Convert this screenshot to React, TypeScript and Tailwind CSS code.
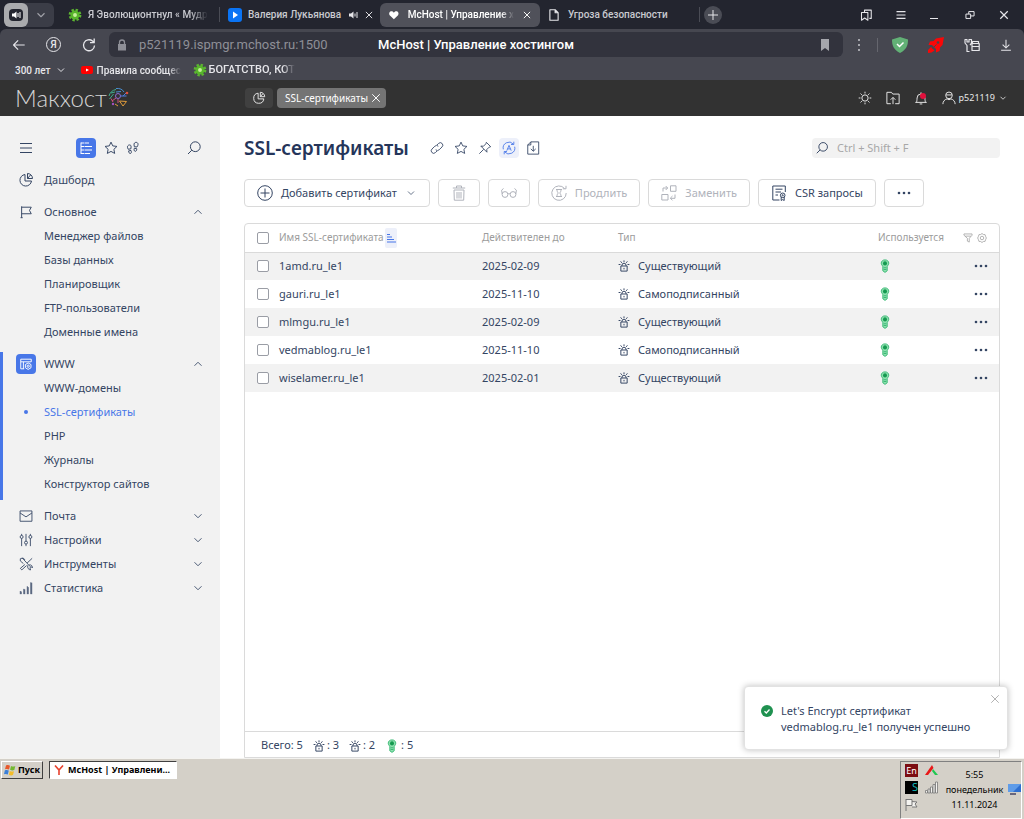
import { useState, type ReactNode } from "react";

const menu = [
  {
    title: "Основное",
    icon: "flag",
    items: ["Менеджер файлов", "Базы данных", "Планировщик", "FTP-пользователи", "Доменные имена"],
  },
  {
    title: "WWW",
    icon: "www",
    items: ["WWW-домены", "SSL-сертификаты", "PHP", "Журналы", "Конструктор сайтов"],
  },
];

const closedMenu = [
  { title: "Почта", icon: "mail" },
  { title: "Настройки", icon: "sliders" },
  { title: "Инструменты", icon: "tools" },
  { title: "Статистика", icon: "stats" },
];

const certificates = [
  { name: "1amd.ru_le1", date: "2025-02-09", type: "Существующий" },
  { name: "gauri.ru_le1", date: "2025-11-10", type: "Самоподписанный" },
  { name: "mlmgu.ru_le1", date: "2025-02-09", type: "Существующий" },
  { name: "vedmablog.ru_le1", date: "2025-11-10", type: "Самоподписанный" },
  { name: "wiselamer.ru_le1", date: "2025-02-01", type: "Существующий" },
];

// all icons are drawn on a 16x16 grid
const icons: Record<string, ReactNode> = {
  menu: <path d="M2 3.5h12M2 8h12M2 12.5h12" />,
  tree: <path d="M3 2.5v11.5M3 3h3M3 6.5h3M3 10h3M3 13.5h3M6.5 3H11M6.5 6.5H14M6.5 10H14M6.5 13.5H12" />,
  star: <path d="M8 1.300l2 4.300 4.800.6-3.500 3.300.9 4.700L8 11.900l-4.200 2.300.9-4.700L1.200 6.200 6 5.600z" />,
  steps: (
    <>
      <path d="M4 4.500c-1.900.2-2.700 1.700-2.200 3.200l.8 1.800 3-.6.2-2.200c.1-1.400-.6-2.300-1.800-2.200zM3 11.300l2.700-.5c.8 1.600.5 3.200-.6 3.500-1.200.2-2.100-1.200-2.100-3zM11.700 1.500c-1.700-.1-2.700 1.300-2.500 2.900l.3 2.100 3 .4 1-1.900c.7-1.600 0-3.300-1.800-3.500zM9.500 8.300l2.800.5c.1 1.800-.7 3.100-1.800 3-1.200-.2-1.600-1.900-1-3.500z" />
    </>
  ),
  search: (
    <>
      <circle cx="9.300" cy="6.700" r="4.900" />
      <path d="M5.800 10.200L2 14" />
    </>
  ),
  pie: (
    <>
      <path d="M7 2.500a5.800 5.800 0 1 0 6.500 6.500H7z" />
      <path d="M9.500 1.500v5h5a5 5 0 0 0-5-5zM9.500 6.500l3-3.500" />
    </>
  ),
  flag: <path d="M3 1.500v13M1.800 14.500h2.400M3 2.500h11l-2 3.700 2 3.800H3" />,
  www: (
    <>
      <path d="M6 13.500H2v-11h12v3M2 5.500h12M5 5.500v8" />
      <circle cx="10.500" cy="10.500" r="1.300" />
      <path d="M10.500 6.800l3.200 1.800v3.700l-3.200 1.900-3.200-1.900V8.600z" />
    </>
  ),
  mail: <path d="M1.200 2.200h13.600v11.800H1.200zM1.200 4.500L8 9l6.800-4.500" />,
  sliders: (
    <>
      <circle cx="3" cy="4.500" r="1.700" />
      <circle cx="8" cy="11" r="1.700" />
      <circle cx="13" cy="4.500" r="1.700" />
      <path d="M3 1v1.800M3 6.200V15M8 1v8.300M8 12.700V15M13 1v1.800M13 6.200V15" />
    </>
  ),
  tools: (
    <>
      <path d="M1.500 2l2.300-.8 9 9.800M1.500 2v2.500L5 7.500M6.500 3.500c0-1.500-1.500-2.500-3-2M15 1.500L9.200 7M6.700 8.600L1.500 13l1.700 1.700 5.500-5" />
      <path d="M10 9.500c-.6 3 .8 5.200 3.300 5.200l-.9-2.400 1.600-1.300 1.200 1.500c.4-2.200-1.200-3.900-3.600-3.500" />
    </>
  ),
  stats: <path d="M1.500 15v-3.500M5.500 15V9M9.500 15V6M13.500 15V1.500M2.500 15v-3M6.500 15V9.500M10.500 15V7M14.500 15V2" />,
  up: <path d="M4 10l4-4 4 4" />,
  down: <path d="M4 6l4 4 4-4" />,
  close: <path d="M3 3l10 10M13 3L3 13" />,
  link: (
    <>
      <path d="M6.500 10a2.800 2.800 0 0 0 4 0l3.300-3.200a2.800 2.800 0 0 0-4-4L8 4.500" />
      <path d="M9.500 6a2.800 2.800 0 0 0-4 0L2.200 9.200a2.800 2.800 0 0 0 4 4L8 11.500" />
    </>
  ),
  pin: <path d="M9.500 1.500l5 5-1.700.5-2.800 2.800.2 3L3.200 5.800l3 .2L9 3.200zM6.500 9.500L1.500 14.500" />,
  refresh: (
    <>
      <path d="M1.500 9.500A6.700 6.700 0 0 1 13 3.500M14.500 6.500A6.700 6.700 0 0 1 3 12.500M13.500 .8V4h-3.200M2.500 15.200V12h3.200" />
      <path d="M5.500 11l2.500-6 2.500 6M6.500 9h3" />
    </>
  ),
  exportFile: <path d="M5.500 1h9v14H2V4.500zM5.500 1v3.500H2M8.300 5.500v6M5.500 9l2.800 2.700L11.100 9" />,
  plus: (
    <>
      <circle cx="8" cy="8" r="7.300" />
      <path d="M8 3.500v9M3.500 8h9" />
    </>
  ),
  trash: <path d="M1.800 3h12.400M5.500 3V1h5v2M3 5l.3 10.200h9.400L13 5zM6 7v6.500M8 7v6.500M10 7v6.500" />,
  glasses: (
    <>
      <circle cx="4" cy="9.500" r="2.900" />
      <circle cx="12" cy="9.500" r="2.900" />
      <path d="M6.900 9c.7-.6 1.500-.6 2.200 0M1.200 9L.6 5.200 2.500 3.500M14.800 9l.6-3.800-1.900-1.700" />
    </>
  ),
  prolong: (
    <>
      <path d="M13.500 3.500A7.200 7.200 0 1 0 15.200 8M15 .8v3h-3.200" />
      <path d="M5 4.500h6M5 11.500h6M6 4.500c0 2 .5 2.500 1.300 3.500C6.500 9 6 9.500 6 11.500M10 4.500c0 2-.5 2.500-1.300 3.500.8 1 1.300 1.500 1.300 3.500" />
    </>
  ),
  replace: <path d="M9.500.8H15v5.500H9.500zM.8 9.500H7V15H.8zM2 6.500V3h4.500M4.700 1l2 2-2 2M14 9.500v3.800H9.500M11.500 11l-2.200 2.200 2.200 2.200" />,
  csr: (
    <>
      <path d="M8.500 15H1.800V1h12.500v6M4.500 4.200h7M4.500 7h5.500M4.500 10H7" />
      <circle cx="11.700" cy="10.300" r="2.300" />
      <circle cx="11.700" cy="10.300" r=".6" />
      <path d="M10.200 12v3.500l1.500-.9 1.500.9V12" />
    </>
  ),
  lock: (
    <>
      <path d="M3.800 8h8.400v6.800H3.800zM5.300 8V7a2.700 2.700 0 0 1 5.400 0v1M8 10.500v2" />
      <path d="M8 .5v2.300M3.500 1.800l1.500 2M12.500 1.800l-1.500 2M.8 6h2.500M15.200 6h-2.500" />
    </>
  ),
  filter: <path d="M1.500 1.500h13v2L10 8.500v6L7 13V8.500l-5.500-5zM3.500 5h9" />,
  gear: (
    <>
      <path d="M8 .8l2.200 1.600 2.700.2.800 2.700L15 8l-1.300 2.700-.8 2.700-2.700.2L8 15.200l-2.200-1.600-2.700-.2-.8-2.700L1 8l1.300-2.700.8-2.700 2.700-.2z" />
      <circle cx="8" cy="8" r="2.800" />
    </>
  ),
  sun: (
    <>
      <circle cx="8" cy="8" r="3.600" />
      <path d="M8 .8v2M8 13.200v2M.8 8h2M13.200 8h2M2.900 2.900l1.500 1.500M11.600 11.600l1.500 1.500M13.100 2.900l-1.500 1.500M4.400 11.600l-1.500 1.500" />
    </>
  ),
  upload: <path d="M5.500 14.500H1V1.500h5.200l1.500 2H15v11h-4.500M8 15V7.500M5.300 10L8 7.300l2.700 2.700" />,
  bell: <path d="M1.500 13h13M3 13c0-1.500.5-2 .5-5a4.500 4.500 0 0 1 9 0c0 3 .5 3.500.5 5M8 1.500v2M6.500 14.800h3" />,
  user: (
    <>
      <circle cx="8" cy="5" r="3.800" />
      <path d="M4.500 4.500h7M1 15c0-3 2-5.300 4.800-6L8 10l2.200-1c2.800.7 4.800 3 4.800 6" />
    </>
  ),
  back: <path d="M14.500 8H2M7 2.700L1.800 8 7 13.300" />,
  reload: <path d="M13.500 8.500A5.500 5.500 0 1 1 11.500 4l1.700 1.500M13.200 1.500v4.200H9" />,
  download: <path d="M8 1v10.500M3.500 7.500L8 12l4.500-4.500M1.500 15h13" />,
  passwords: <path d="M5.500 14.500H3V8.500L1 6V2.500h2V5h2V2.500h2.500V6L6 8.200M8 6.500h7.200v7H8zM8.500 6.500v-2h6v2M8 9.500h7" />,
  tabs: <path d="M6 4.500v-3h9v11h-2.500M2 4.700h8.500V15L6.200 12 2 15z" />,
  restore: <path d="M1.500 6.500h7.500v7H1.500zM6 6.500v-4h8.500v7H9" />,
  page: <path d="M2.500 1h7l4 4v10h-11zM9.500 1v4h4" />,
};

function Icon({ name, size = "size-4", width = 1 }: { name: string; size?: string; width?: number }) {
  return (
    <svg
      viewBox="0 0 16 16"
      className={`${size} shrink-0`}
      fill="none"
      stroke="currentColor"
      strokeWidth={width}
      strokeLinejoin="round"
      aria-hidden="true"
    >
      {icons[name]}
    </svg>
  );
}

function Bulb() {
  return (
    <svg viewBox="0 0 16 16" className="size-3.5 shrink-0" aria-label="Используется">
      <path d="M8 1c2.600 0 4.300 1.600 4.300 3.800 0 1.700-1.400 2.700-1.800 3.900v4.800L8 15.300l-2.500-1.800V8.700C5.100 7.500 3.700 6.500 3.700 4.800 3.700 2.600 5.400 1 8 1z" fill="#8fe0b0" stroke="#2fb56d" />
      <circle cx="8" cy="5" r="2.300" fill="#159a50" />
      <path d="M6.500 10h3M6.500 12h3" stroke="#2fb56d" />
    </svg>
  );
}

function Dots() {
  return (
    <svg viewBox="0 0 14 4" className="h-1 w-3.5" fill="currentColor" aria-hidden="true">
      <circle cx="2" cy="2" r="1.300" />
      <circle cx="7" cy="2" r="1.300" />
      <circle cx="12" cy="2" r="1.300" />
    </svg>
  );
}

function Gearwheel() {
  return (
    <svg viewBox="0 0 16 16" className="size-3.5 shrink-0" aria-hidden="true">
      <circle cx="8" cy="8" r="5.800" fill="none" stroke="#5cb531" strokeWidth="3" strokeDasharray="2.600 1.950" />
      <circle cx="8" cy="8" r="5.200" fill="#57b52b" />
      <circle cx="8" cy="8" r="2.200" fill="#c5ee9b" />
    </svg>
  );
}

function BrowserBar() {
  return (
    <header className="bg-[#23252f] font-[Roboto,sans-serif] text-[#e6e6ea]">
      <div className="flex h-[29px] items-center text-[10px] font-medium">
        <div className="ml-1 flex h-6 w-[50px] shrink-0 items-center rounded-md bg-[#3b3d47]">
          <button aria-label="Звук" className="flex size-6 items-center justify-center rounded-md bg-[#aaabae]">
            <svg viewBox="0 0 16 16" className="size-4" aria-hidden="true">
              <rect x="1" y="2" width="14" height="12" rx="4" fill="#23252f" />
              <path d="M4 6.500h2L8.500 4.500v7L6 9.500H4z" fill="#fff" />
              <path d="M10 6v4M12 5v6" stroke="#fff" />
            </svg>
          </button>
          <button aria-label="Список вкладок" className="flex flex-1 justify-center text-[#a0a1a8]">
            <Icon name="down" size="size-3.5" width={1.3} />
          </button>
        </div>
        <div className="flex w-[166px] shrink-0 items-center gap-1.5 border-r border-[#4a4c55] pl-3.5">
          <Gearwheel />
          <span className="whitespace-nowrap text-[#c9cad0] [mask-image:linear-gradient(to_right,black_85%,transparent)]">
            Я Эволюционтнул « Мудр
          </span>
        </div>
        <div className="flex w-[160px] shrink-0 items-center gap-1.5 pl-2">
          <svg viewBox="0 0 14 14" className="size-3.5" aria-hidden="true">
            <rect width="14" height="14" rx="3" fill="#0a74f5" />
            <path d="M5 3.500l5 3.500-5 3.500z" fill="#fff" />
          </svg>
          <span className="w-[94px] whitespace-nowrap text-[#c9cad0]">Валерия Лукьянова</span>
          <svg viewBox="0 0 10 10" className="size-2.5" aria-hidden="true">
            <path d="M1 3.500h2L5.500 1.500v7L3 6.500H1z" fill="currentColor" />
            <path d="M7 3.500v3M9 2v6" stroke="currentColor" />
          </svg>
          <button aria-label="Закрыть вкладку"><Icon name="close" size="size-2.5" width={1.5} /></button>
        </div>
        <div className="flex h-6 w-[160px] shrink-0 items-center gap-2 rounded-md bg-[#50515a] pl-2 pr-2 text-white">
          <svg viewBox="0 0 14 14" className="size-3.5" aria-hidden="true">
            <path d="M7 12L2 7.200C.5 5 2 2.500 4.200 2.500 5.500 2.500 6.500 3.300 7 4.200c.5-.9 1.500-1.700 2.800-1.700C12 2.500 13.500 5 12 7.200z" fill="#fff" />
          </svg>
          <span className="flex-1 whitespace-nowrap [mask-image:linear-gradient(to_right,black_88%,transparent)]">
            McHost | Управление х
          </span>
          <button aria-label="Закрыть вкладку"><Icon name="close" size="size-2.5" width={1.5} /></button>
        </div>
        <div className="flex w-[160px] shrink-0 items-center gap-2 border-r border-[#4a4c55] pl-2">
          <Icon name="page" size="size-3" width={1.5} />
          <span className="text-[#c9cad0]">Угроза безопасности</span>
        </div>
        <button aria-label="Новая вкладка" className="ml-1 flex size-[18px] items-center justify-center rounded-full bg-[#4a4c55]">
          <svg viewBox="0 0 10 10" className="size-2.5" stroke="currentColor" aria-hidden="true">
            <path d="M5 0v10M0 5h10" />
          </svg>
        </button>
        <div className="ml-auto flex items-center gap-[23px] pr-3.5">
          <button aria-label="Закладки"><Icon name="tabs" size="size-3" width={1.4} /></button>
          <button aria-label="Меню"><Icon name="menu" size="size-3" width={1.4} /></button>
          <button aria-label="Свернуть" className="mt-2 h-px w-2 bg-current" />
          <button aria-label="Развернуть" className="ml-1"><Icon name="restore" size="size-2.5" width={1.6} /></button>
          <button aria-label="Закрыть"><Icon name="close" size="size-3" width={1.6} /></button>
        </div>
      </div>

      <div className="rounded-t-md bg-[#464750]">
        <div className="flex h-[31px] items-center pl-3">
          <button aria-label="Назад"><Icon name="back" size="size-3.5" width={1.3} /></button>
          <button aria-label="Яндекс" className="ml-5 flex size-[15px] items-center justify-center rounded-full border border-current text-[10px] font-medium">
            Я
          </button>
          <button aria-label="Обновить" className="ml-5"><Icon name="reload" size="size-4" width={1.3} /></button>
          <div className="relative ml-3 mr-3 flex h-[25px] flex-1 items-center justify-end rounded-md bg-[#32333d] pl-2 pr-3.5">
            <label className="mr-auto flex items-center gap-3 text-[#8e8f97]">
              <svg viewBox="0 0 10 12" className="h-3 w-2.5" aria-hidden="true">
                <path d="M1 5h8v6.500H1z" fill="currentColor" />
                <path d="M2.500 5V3.500a2.500 2.500 0 0 1 5 0V5" fill="none" stroke="currentColor" strokeWidth="1.300" />
              </svg>
              <input type="text" aria-label="Адрес" defaultValue="p521119.ispmgr.mchost.ru:1500" className="h-4 w-[220px] bg-transparent text-[13px] leading-4 outline-none" />
            </label>
            <p className="pointer-events-none absolute inset-x-0 mx-auto w-max text-[13px] font-medium text-white">McHost | Управление хостингом</p>
            <button aria-label="В закладки" className="text-[#a5a6ac]">
              <svg viewBox="0 0 8 12" className="h-3 w-2" fill="currentColor" aria-hidden="true">
                <path d="M0 0h8v12L4 9l-4 3z" />
              </svg>
            </button>
          </div>
          <button aria-label="Ещё" className="ml-0.5 flex w-3 flex-col items-center gap-[3px] pr-2">
            <span className="size-0.5 bg-[#a5a6ac]" />
            <span className="size-0.5 bg-[#a5a6ac]" />
            <span className="size-0.5 bg-[#a5a6ac]" />
          </button>
          <span className="ml-2 h-3.5 w-px bg-[#65666e]" />
          <div className="ml-3.5 flex items-center gap-5 pr-3">
            <svg viewBox="0 0 16 16" className="size-4" aria-label="Защита">
              <path d="M8 0l8 2.500c0 6-1.500 10-8 13.500C1.500 12.500 0 8.500 0 2.500z" fill="#62b176" />
              <path d="M5 7l2.500 2.500L11.500 5.500" stroke="#fff" strokeWidth="1.500" fill="none" />
            </svg>
            <svg viewBox="0 0 16 16" className="size-4" fill="#fb0707" aria-label="Ускорение">
              <path d="M16 0L8 1.500 5.500 4 2 4.500.5 8 4 8l4 4v3.500l3.500-1.500.5-3.500L14.500 8zM3 10l-3 3v3l3.500-.5 3-2z" />
              <circle cx="10" cy="5.500" r="1.300" fill="#464750" />
              <path d="M4.500 11.500l4-4" stroke="#464750" />
            </svg>
            <button aria-label="Пароли"><Icon name="passwords" size="size-4" width={1.2} /></button>
            <button aria-label="Загрузки"><Icon name="download" size="size-3" width={1.4} /></button>
          </div>
        </div>
        <nav className="flex h-5 items-center pl-[15px] text-[10px] font-medium">
          <a href="#folder" className="flex items-center gap-1">
            300 лет
            <Icon name="down" size="size-3" width={1.3} />
          </a>
          <a href="#rules" className="ml-3.5 flex items-center gap-1">
            <svg viewBox="0 0 12 10" className="h-2.5 w-3" aria-hidden="true">
              <rect y="1" width="12" height="8" rx="2" fill="#f00" />
              <path d="M5 3.500L8 5 5 6.500z" fill="#fff" />
            </svg>
            <span className="w-[84px] whitespace-nowrap [mask-image:linear-gradient(to_right,black_85%,transparent)]">
              Правила сообщес
            </span>
          </a>
          <a href="#wealth" className="ml-3 flex items-center gap-0.5 text-[11px]">
            <Gearwheel />
            <span className="whitespace-nowrap [mask-image:linear-gradient(to_right,black_85%,transparent)]">
              БОГАТСТВО, КОТ
            </span>
          </a>
        </nav>
      </div>
    </header>
  );
}

function PanelHeader() {
  return (
    <header className="flex h-9 items-center bg-[#323232] text-[#e8e8e8]">
      <a href="#home" className="flex w-[245px] items-center pl-[15px]">
        <span className="font-[Lato,'Open_Sans',sans-serif] text-2xl leading-none font-light text-[#d4d4d4]">Макхост</span>
        <svg viewBox="0 0 22 22" className="size-[22px]" fill="none" aria-hidden="true">
          <path d="M2 9a9 9 0 0 1 7-6.500M2.500 12l4-5M4 6l4-1" stroke="#3fae8e" />
          <path d="M9 1.500c4-.5 6.500 1 8 3.500M9 5l5-.5" stroke="#4a8fd0" />
          <circle cx="11" cy="9" r="2.500" stroke="#8f6bd0" />
          <path d="M13.500 9h6M16 9l3-3" stroke="#4a7de0" />
          <path d="M9 11l-4 3M4 11.500l2 3.500M11 12v4" stroke="#d0507c" />
          <path d="M12.500 14l7 .5-3.500 4.500zM8 17l3 2" stroke="#e09b3a" />
          <circle cx="20" cy="6" r="1.300" fill="#e0503a" />
          <circle cx="6" cy="17" r="1.200" fill="#a050c0" />
        </svg>
      </a>
      <button aria-label="Дашборд" className="flex h-5 w-7 items-center justify-center rounded-sm bg-[#404040]">
        <Icon name="pie" size="size-3.5" width={1.1} />
      </button>
      <div className="ml-1 flex h-5 items-center gap-0.5 rounded-sm bg-[#747474] pl-2 pr-1 text-[10px] text-white">
        SSL-сертификаты
        <button aria-label="Закрыть"><Icon name="close" size="size-3" width={1.3} /></button>
      </div>
      <div className="ml-auto flex items-center gap-3.5 pr-4">
        <button aria-label="Тема"><Icon name="sun" size="size-3.5" width={1.1} /></button>
        <button aria-label="Файлы"><Icon name="upload" size="size-3.5" width={1.1} /></button>
        <button aria-label="Уведомления" className="relative">
          <Icon name="bell" size="size-3.5" width={1.1} />
          <span className="absolute right-0.5 top-0.5 size-1.5 rounded-full bg-[#e0103c]" />
        </button>
        <button className="flex items-center gap-[3px] text-[9px]">
          <Icon name="user" size="size-3.5" width={1.1} />
          p521119
          <Icon name="down" size="size-2.5" width={1.3} />
        </button>
      </div>
    </header>
  );
}

function Sidebar({ active, onSelect }: { active: string; onSelect: (title: string) => void }) {
  return (
    <aside className="w-[220px] shrink-0 bg-[#f2f2f2] pt-4 text-[11px] text-[#344563]">
      <div className="flex h-8 items-center px-[18px]">
        <button aria-label="Свернуть меню"><Icon name="menu" /></button>
        <div className="ml-[42px] flex items-center gap-2">
          <button aria-label="Все разделы" className="flex size-5 items-center justify-center rounded-sm bg-[#4877e8] text-white">
            <Icon name="tree" size="size-4" />
          </button>
          <button aria-label="Избранное"><Icon name="star" size="size-3.5" width={1.1} /></button>
          <button aria-label="История"><Icon name="steps" size="size-3.5" width={1.1} /></button>
        </div>
        <button aria-label="Поиск" className="ml-auto"><Icon name="search" /></button>
      </div>
      <nav className="pt-1">
        <a href="#dashboard" className="flex h-6 items-center gap-2.5 pl-[18px]">
          <Icon name="pie" />
          Дашборд
        </a>
        {menu.map((group) => {
          const current = group.items.includes(active);
          return (
            <section key={group.title} className={`mt-2 border-l-3 pb-1 last-of-type:mb-1 first-of-type:-mb-1 ${current ? "border-[#4877e8]" : "border-transparent"}`}>
              <button className="flex h-6 w-full items-center pl-[13px] pr-[15px]">
                <span className={`mr-2 flex size-5 items-center justify-center rounded-sm ${current ? "bg-[#4877e8] text-white" : ""}`}>
                  <Icon name={group.icon} size="size-3.5" width={1.1} />
                </span>
                {group.title}
                <span className="ml-auto"><Icon name="up" size="size-3.5" /></span>
              </button>
              <ul>
                {group.items.map((item) => (
                  <li key={item}>
                    <a
                      href={`#${item}`}
                      aria-current={item === active ? "page" : undefined}
                      onClick={() => onSelect(item)}
                      className={`flex h-6 items-center ${item === active ? "text-[#4877e8]" : ""}`}
                    >
                      <span className={`ml-[21px] mr-4 size-1 rounded-full ${item === active ? "bg-[#4877e8]" : ""}`} />
                      {item}
                    </a>
                  </li>
                ))}
              </ul>
            </section>
          );
        })}
        {closedMenu.map((group) => (
          <button key={group.title} className="flex h-6 w-full items-center gap-[11px] pl-[19px] pr-[15px]">
            <Icon name={group.icon} size="size-3.5" />
            {group.title}
            <span className="ml-auto"><Icon name="down" size="size-3.5" /></span>
          </button>
        ))}
      </nav>
    </aside>
  );
}

function ToolButton({ icon, label, text, disabled, more }: { icon?: string; label?: string; text?: string; disabled?: boolean; more?: boolean }) {
  return (
    <button
      disabled={disabled}
      aria-label={label}
      className="flex h-7 items-center gap-2 rounded-sm border border-[#dadada] px-3 text-[#344563] disabled:text-[#b0b3bb]"
    >
      {icon ? <Icon name={icon} /> : <Dots />}
      {text}
      {more && <Icon name="down" size="size-3" />}
    </button>
  );
}

function Certificates() {
  return (
    <main className="flex min-w-0 flex-1 flex-col bg-white px-6 pt-4 text-[11px] text-[#344563]">
      <div className="flex h-8 items-center">
        <h1 className="text-[19px] font-semibold text-[#25355a]">SSL-сертификаты</h1>
        <div className="ml-[18px] flex items-center gap-1">
          <button aria-label="Ссылка" className="flex size-5 items-center justify-center"><Icon name="link" size="size-3.5" /></button>
          <button aria-label="В избранное" className="flex size-5 items-center justify-center"><Icon name="star" size="size-3.5" /></button>
          <button aria-label="Закрепить" className="flex size-5 items-center justify-center"><Icon name="pin" size="size-3.5" /></button>
          <button aria-label="Автообновление" className="flex size-5 items-center justify-center rounded-sm bg-[#edf0fa] text-[#4877e8]"><Icon name="refresh" size="size-3.5" /></button>
          <button aria-label="Экспорт" className="flex size-5 items-center justify-center"><Icon name="exportFile" size="size-3.5" /></button>
        </div>
        <label className="ml-auto flex h-5 w-[188px] items-center gap-2 rounded-sm bg-[#f2f2f2] pl-[3px]">
          <Icon name="search" size="size-3.5" width={1.1} />
          <input type="search" aria-label="Поиск" placeholder="Ctrl + Shift + F" className="w-full bg-transparent outline-none placeholder:text-[#a8a8a8]" />
        </label>
      </div>

      <div className="mt-[15px] flex gap-2">
        <ToolButton icon="plus" text="Добавить сертификат" more />
        <ToolButton icon="trash" label="Удалить" disabled />
        <ToolButton icon="glasses" label="Просмотр" disabled />
        <ToolButton icon="prolong" text="Продлить" disabled />
        <ToolButton icon="replace" text="Заменить" disabled />
        <ToolButton icon="csr" text="CSR запросы" />
        <ToolButton label="Ещё" />
      </div>

      <div className="mt-4 flex flex-1 flex-col rounded-t-sm border border-[#dadada]">
        <table className="w-full table-fixed text-left">
          <colgroup>
            <col className="w-[34px]" />
            <col className="w-[203px]" />
            <col className="w-[136px]" />
            <col />
            <col className="w-[84px]" />
            <col className="w-[37px]" />
          </colgroup>
          <thead>
            <tr className="h-7 border-b border-[#dadada] text-[10px] text-[#9c9c9c]">
              <th className="pl-3">
                <input type="checkbox" aria-label="Выбрать все" className="block size-3 appearance-none rounded-xs border border-[#9a9da5] bg-white" />
              </th>
              <th className="font-normal">
                <span className="flex items-center gap-px">
                  Имя SSL-сертификата
                  <button aria-label="Сортировка" className="flex h-5 w-3 items-center justify-center rounded-xs bg-[#edf0fa] text-[#4877e8]">
                    <svg viewBox="0 0 10 10" className="size-2.5" stroke="currentColor" aria-hidden="true">
                      <path d="M1 1.500h3M1 4h5M1 6.500h7M1 9h9" />
                    </svg>
                  </button>
                </span>
              </th>
              <th className="font-normal">Действителен до</th>
              <th className="font-normal">Тип</th>
              <th className="font-normal">Используется</th>
              <th>
                <span className="flex items-center gap-1 pl-px">
                  <button aria-label="Фильтр"><Icon name="filter" size="size-2.5" width={1.2} /></button>
                  <button aria-label="Настройки таблицы"><Icon name="gear" size="size-2.5" width={1.2} /></button>
                </span>
              </th>
            </tr>
          </thead>
          <tbody>
            {certificates.map((cert) => (
              <tr key={cert.name} className="h-7 odd:bg-[#f2f2f2]">
                <td className="pl-3">
                  <input type="checkbox" aria-label={cert.name} className="block size-3 appearance-none rounded-xs border border-[#9a9da5] bg-white checked:bg-[#4877e8]" />
                </td>
                <td>{cert.name}</td>
                <td>{cert.date}</td>
                <td>
                  <span className="flex items-center gap-2">
                    <Icon name="lock" size="size-3" width={1.3} />
                    {cert.type}
                  </span>
                </td>
                <td><Bulb /></td>
                <td>
                  <button aria-label={`Действия ${cert.name}`} className="block pl-3"><Dots /></button>
                </td>
              </tr>
            ))}
          </tbody>
        </table>
        <div className="mt-auto flex h-[26px] items-center gap-2.5 border-t border-[#dadada] pl-4 pt-0.5">
          <span>Всего: 5</span>
          <span className="flex items-center gap-0.5"><Icon name="lock" size="size-3" width={1.3} /> : 3</span>
          <span className="flex items-center gap-0.5"><Icon name="lock" size="size-3" width={1.3} /> : 2</span>
          <span className="flex items-center gap-0.5"><Bulb /> : 5</span>
        </div>
      </div>
    </main>
  );
}

function Toast({ onClose }: { onClose: () => void }) {
  return (
    <div role="status" className="absolute bottom-2 right-4 flex w-[264px] items-start gap-2 rounded-sm border border-[#e2e2e2] bg-white pb-3.5 pl-4 pt-4 text-[11px] leading-4 text-[#344563] shadow-[0_0_6px_rgba(0,0,0,0.25)]">
      <svg viewBox="0 0 12 12" className="mt-0.5 size-3 shrink-0" aria-hidden="true">
        <circle cx="6" cy="6" r="6" fill="#1f9150" />
        <path d="M3.500 6.200l1.800 1.800 3.200-3.500" stroke="#fff" strokeWidth="1.300" fill="none" />
      </svg>
      <p className="w-[200px]">Let's Encrypt сертификат vedmablog.ru_le1 получен успешно</p>
      <button aria-label="Закрыть уведомление" onClick={onClose} className="absolute right-1.5 top-1.5 text-[#aaa]">
        <Icon name="close" size="size-3" width={1.2} />
      </button>
    </div>
  );
}

function Taskbar() {
  return (
    <footer className="flex h-[61px] border-t border-[#f4f3f0] bg-[#d4d0c8] font-['Noto_Sans',sans-serif] text-[9px] text-black">
      <button className="ml-px mt-0.5 flex h-[18px] w-[42px] items-center gap-0.5 border border-b-[#404040] border-l-white border-r-[#404040] border-t-white pl-0.5 font-bold">
        <svg viewBox="0 0 12 12" className="size-3 shrink-0" aria-hidden="true">
          <path d="M2 1.500c1.500-.8 2.700-.6 4 .2L5 5.500c-1.300-.7-2.500-.8-4-.2z" fill="#e8582a" />
          <path d="M7 2c1.500.7 2.800.7 4.300 0l-1 4c-1.500.6-2.800.5-4.200-.2z" fill="#74b830" />
          <path d="M.8 6.500c1.500-.7 2.700-.6 4 .1L3.800 10.500c-1.300-.7-2.300-.8-3.800-.2z" fill="#3a7fd8" />
          <path d="M5.800 7c1.500.7 2.700.8 4.200.2l-1 3.800c-1.500.6-2.700.5-4.100-.2z" fill="#f4bd28" />
        </svg>
        Пуск
      </button>
      <button className="ml-1.5 mt-0.5 flex h-[18px] w-[128px] items-center gap-1 whitespace-nowrap border border-l-[#404040] border-t-[#404040] border-b-white border-r-white bg-white pl-1 font-bold">
        <svg viewBox="0 0 10 10" className="size-2.5 shrink-0" aria-hidden="true">
          <path d="M1 0.500l4 4.500 4-4.500M5 5v5" stroke="#e8402c" strokeWidth="1.600" fill="none" />
        </svg>
        McHost | Управлени...
      </button>
      <div className="ml-auto mr-0.5 mt-0.5 flex w-[122px] items-start border border-b-white border-l-[#808080] border-r-white border-t-[#808080] pl-1 pt-0.5">
        <div className="grid grid-cols-[20px_16px] gap-y-1">
          <span className="flex size-[13px] items-center justify-center bg-[#7c0d12] text-white">En</span>
          <svg viewBox="0 0 13 13" className="size-[13px]" aria-hidden="true">
            <path d="M7 1l1.500 3L3 11H0z" fill="#e81818" />
            <path d="M8 5l5 6h-3L7 7z" fill="#1fc850" />
          </svg>
          <span className="flex size-[13px] items-center justify-end bg-black text-[11px] text-[#12b8b8]">S</span>
          <svg viewBox="0 0 13 13" className="size-[13px]" fill="#f4f3f0" stroke="#777" strokeWidth=".8" aria-hidden="true">
            <path d="M.5 9.500h2V12h-2zM3 8h2v4H3zM5.500 6h2v6h-2zM8 3.500h2V12H8zM10.500 1h2v11h-2z" />
          </svg>
          <svg viewBox="0 0 13 13" className="size-[13px]" fill="#f4f3f0" stroke="#777" aria-hidden="true">
            <path d="M1 1v12M1 1.500h6v6H1M7 3.500l5 .5-2 2 2 3H7" />
          </svg>
        </div>
        <div className="flex-1 pt-[3px] text-center leading-[15px]">
          <p>5:55</p>
          <p>понедельник</p>
          <p>11.11.2024</p>
        </div>
        <svg viewBox="0 0 13 11" className="mt-5 h-[11px] w-[13px]" aria-label="Рабочий стол">
          <rect width="13" height="8" fill="#2f6fd0" />
          <path d="M0 0h13L5 8H0z" fill="#5f9ce8" />
          <path d="M2 10h6" stroke="#446" strokeWidth="1.500" />
        </svg>
      </div>
    </footer>
  );
}

export default function App() {
  const [active, setActive] = useState("SSL-сертификаты");
  const [toast, setToast] = useState(true);

  return (
    <div className="flex min-h-screen flex-col font-['Noto_Sans',sans-serif]">
      <BrowserBar />
      <PanelHeader />
      <div className="relative flex flex-1">
        <Sidebar active={active} onSelect={setActive} />
        <Certificates />
        {toast && <Toast onClose={() => setToast(false)} />}
      </div>
      <Taskbar />
    </div>
  );
}
